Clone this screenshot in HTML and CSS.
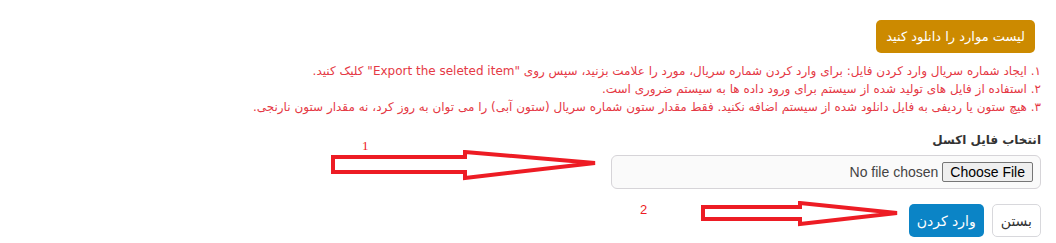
FILE: index.html
```html
<!DOCTYPE html>
<html lang="fa" dir="rtl">
<head>
    <meta charset="UTF-8">
    <meta name="viewport" content="width=device-width, initial-scale=1.0">
    <title>ورود شماره سریال</title>
    <link rel="stylesheet" href="styles.css">
</head>
<body>
    <div class="import-panel">
        <div class="download-row">
            <button class="btn btn-warning">لیست موارد را دانلود کنید</button>
        </div>

        <ol class="help-list">
            <li>۱. ایجاد شماره سریال وارد کردن فایل: برای وارد کردن شماره سریال، مورد را علامت بزنید، سپس روی "Export the seleted item" کلیک کنید.</li>
            <li>۲. استفاده از فایل های تولید شده از سیستم برای ورود داده ها به سیستم ضروری است.</li>
            <li>۳. هیچ ستون یا ردیفی به فایل دانلود شده از سیستم اضافه نکنید. فقط مقدار ستون شماره سریال (ستون آبی) را می توان به روز کرد، نه مقدار ستون نارنجی.</li>
        </ol>

        <label class="field-label" for="excelFile">انتخاب فایل اکسل</label>
        <div class="file-box">
            <input type="file" id="excelFile" class="file-input">
        </div>

        <div class="actions">
            <button class="btn btn-light">بستن</button>
            <button class="btn btn-primary">وارد کردن</button>
        </div>

        <!-- annotation arrows -->
        <div class="note note-1">
            <span class="note-num num-1">1</span>
            <svg width="270" height="32" viewBox="0 0 270 32">
                <path d="M2 7 H134 V2 L264 13 L134 28 V22 H2 Z" fill="none" stroke="#ed1c24" stroke-width="4"/>
            </svg>
        </div>
        <div class="note note-2">
            <span class="note-num num-2">2</span>
            <svg width="200" height="26" viewBox="0 0 200 26">
                <path d="M2 6 H99 V2 L196 12 L99 23 V18 H2 Z" fill="none" stroke="#ed1c24" stroke-width="4"/>
            </svg>
        </div>
    </div>
</body>
</html>
```

FILE: styles.css
```css
body {
    margin: 0;
    font-family: 'DejaVu Sans', sans-serif;
    background: #fff;
    color: #333;
}
.import-panel {
    position: relative;
    padding: 20px 15px 0 15px;
}
.download-row {
    display: flex;
    padding-right: 6px;
}
.btn {
    font-family: 'DejaVu Sans', sans-serif;
    font-size: 14px;
    border-radius: 5px;
    border: 1px solid transparent;
    cursor: pointer;
}
.btn-warning {
    background: #cc8a00;
    color: #fff;
    height: 33px;
    padding: 0 9px;
    font-size: 13px;
}
.help-list {
    list-style: none;
    margin: 9px 0 0 0;
    padding: 0;
    color: #e53945;
    font-size: 12px;
    line-height: 18px;
}
.field-label {
    display: block;
    margin-top: 17px;
    font-size: 12px;
    font-weight: bold;
    color: #333;
}
.file-box {
    width: 414px;
    margin-top: 8px;
    padding: 6px 7px;
    background: #fafafa;
    border: 1px solid #d6d4d8;
    border-radius: 6px;
    display: flex;
}
.file-input {
    font-family: 'Liberation Sans', Arial, sans-serif;
    font-size: 14px;
    color: #444;
}
.file-input::file-selector-button {
    font-family: 'Liberation Sans', Arial, sans-serif;
    font-size: 14px;
    height: 20px;
    padding: 0 7px;
    margin-left: 4px;
    border: 1px solid #767676;
    border-radius: 2px;
    background: #efefef;
}
.actions {
    display: flex;
    gap: 8px;
    margin-top: 15px;
}
.btn-light {
    background: #fff;
    border-color: #d8d8dc;
    color: #333;
    height: 33px;
    padding: 0 8px;
}
.btn-primary {
    background: #0b84c6;
    color: #fff;
    height: 33px;
    padding: 0 7px;
}
.note {
    position: absolute;
}
.note svg {
    display: block;
}
.note-1 {
    left: 331px;
    top: 150px;
}
.note-2 {
    left: 701px;
    top: 201px;
}
.note-num {
    position: absolute;
    color: #ed1c24;
    font-size: 13px;
}
.num-1 {
    font-family: 'Liberation Serif', serif;
    left: 31px;
    top: -12px;
}
.num-2 {
    font-family: 'Liberation Sans', sans-serif;
    left: -61px;
    top: 1px;
}
```
